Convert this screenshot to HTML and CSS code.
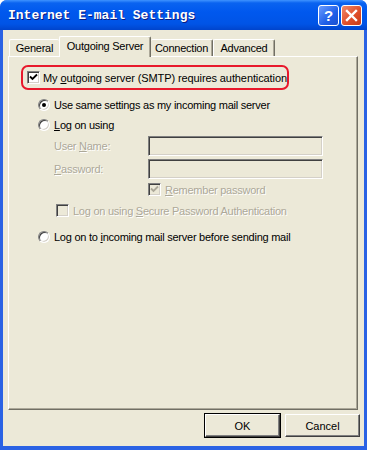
FILE: index.html
```html
<!DOCTYPE html>
<html lang="en">
<head>
  <meta charset="UTF-8">
  <title>Internet E-mail Settings</title>
  <link rel="stylesheet" href="styles.css">
</head>
<body>
  <div class="window">
    <div class="titlebar">
      <span class="title">Internet E-mail Settings</span>
      <div class="title-btns">
        <span class="tbtn help">?</span>
        <span class="tbtn close">
          <svg width="13" height="13" viewBox="0 0 13 13"><path d="M2 2 L11 11 M11 2 L2 11" stroke="#fff" stroke-width="2.4" stroke-linecap="square"/></svg>
        </span>
      </div>
    </div>
    <div class="client">
      <div class="tabs">
        <div class="tab t-general">General</div>
        <div class="tab active t-out">Outgoing Server</div>
        <div class="tab t-conn">Connection</div>
        <div class="tab t-adv">Advanced</div>
      </div>
      <div class="panel">
        <div class="auth">
          <span class="check">
            <svg width="9" height="9" viewBox="0 0 9 9"><path d="M1 3.5 L3.5 6 L8 1.5" stroke="#000" stroke-width="1.8" fill="none"/></svg>
          </span>
          <span class="wide">My <u>o</u>utgoing server (SMTP) requires authentication</span>
        </div>
        <div class="row radio-row first">
          <span class="radio on"></span>
          <span>Use same settings as my incoming mail server</span>
        </div>
        <div class="row radio-row second">
          <span class="radio"></span>
          <span><u>L</u>og on using</span>
        </div>
        <div class="field first-field">
          <label class="dim">User <u>N</u>ame:</label>
          <span class="input"></span>
        </div>
        <div class="field">
          <label class="dim"><u>P</u>assword:</label>
          <span class="input"></span>
        </div>
        <div class="row remember">
          <span class="check disabled">
            <svg width="9" height="9" viewBox="0 0 9 9"><path d="M1 3.5 L3.5 6 L8 1.5" stroke="#aca899" stroke-width="1.8" fill="none"/></svg>
          </span>
          <span class="dim"><u>R</u>emember password</span>
        </div>
        <div class="row spa">
          <span class="check disabled"></span>
          <span class="dim">Log on using <u>S</u>ecure Password Authentication</span>
        </div>
        <div class="row radio-row before">
          <span class="radio"></span>
          <span>Log on to <u>i</u>ncoming mail server before sending mail</span>
        </div>
      </div>
      <div class="buttons">
        <button class="btn default">OK</button>
        <button class="btn">Cancel</button>
      </div>
    </div>
  </div>
</body>
</html>
```

FILE: styles.css
```css
:root {--face: #ece9d8;--dark: #716f64;--shadow: #aca899;--dim: #aca899;}
* { box-sizing: border-box; }
body {margin: 0;background: #fff;font-family: "Liberation Sans", Arial, sans-serif;font-size: 11px;letter-spacing: -0.25px;color: #000;white-space: nowrap;}
u {text-decoration: underline;text-underline-offset: 1px;}
.window {width: 367px;height: 450px;display: flex;flex-direction: column;background: #2a62e4;border-radius: 7px 7px 0 0;overflow: hidden;}
.titlebar {height: 30px;display: flex;align-items: center;justify-content: space-between;padding: 0 5px 0 8px;background: linear-gradient(#3f93ff 0, #0a63f0 3px, #0058ee 40%, #0054e6 80%, #0044cc 100%);}
.title {font-family: "Liberation Mono", monospace;font-weight: bold;font-size: 13px;letter-spacing: 0;color: #fff;text-shadow: 1px 1px #0a1a80;margin-top: 1px;}
.title-btns {display: flex;gap: 2px;}
.tbtn {width: 21px;height: 21px;border: 1px solid #fff;border-radius: 3px;display: flex;align-items: center;justify-content: center;color: #fff;font-weight: bold;font-size: 15px;}
.help {background: linear-gradient(135deg, #6a9cff, #1f5fe8 60%, #1a50d0);}
.close {background: linear-gradient(135deg, #f08a6c, #e0502c 55%, #c83c18);}
.client {flex: 1;margin: 0 3px 4px 3px;background: var(--face);display: flex;flex-direction: column;}
.tabs {display: flex;align-items: flex-end;height: 26px;padding-left: 6px;}
.tab {height: 17px;display: flex;align-items: center;justify-content: center;background: var(--face);border-top: 1px solid #fff;border-left: 1px solid #fff;border-right: 1px solid var(--dark);border-radius: 2px 2px 0 0;box-shadow: inset -1px 0 var(--shadow);}
.t-general {width: 50px;border-right: none;box-shadow: none;}
.t-out {width: 92px;height: 21px;margin-bottom: -1px;position: relative;z-index: 1;padding-bottom: 2px;}
.t-conn {width: 62px;border-left: none;}
.t-adv {width: 62px;}
.panel {margin-left: 5px;width: 350px;height: 354px;border-top: 1px solid #fff;border-left: 1px solid #fff;border-right: 1px solid var(--dark);border-bottom: 1px solid var(--dark);box-shadow: inset -1px -1px var(--shadow);padding: 8px 0 0 12px;}
.auth {width: 268px;height: 25px;border: 2px solid #e8192c;border-radius: 7px;display: flex;align-items: center;gap: 3px;padding-left: 4px;}
.wide {letter-spacing: -0.1px;}
.check {width: 13px;height: 13px;flex: none;background: #fff;border: 1px solid;border-color: #808080 #fff #fff #808080;box-shadow: inset 1px 1px #404040, inset -1px -1px #d4d0c8;display: flex;align-items: center;justify-content: center;}
.check.disabled {background: var(--face);}
.row {display: flex;align-items: center;height: 16px;gap: 4px;}
.radio-row {padding-left: 17px;gap: 4px;}
.first {margin-top: 7px;}
.second {margin-top: 4px;}
.radio {width: 12px;height: 12px;flex: none;border-radius: 50%;background: #fff;border: 1px solid;border-color: #808080 #fff #fff #808080;box-shadow: inset 1px 1px #404040, inset -1px -1px #d4d0c8;display: flex;align-items: center;justify-content: center;}
.radio.on::after {content: "";width: 4px;height: 4px;border-radius: 50%;background: #000;}
.field {display: flex;align-items: center;height: 20px;margin-top: 3px;padding-left: 33px;}
.first-field {margin-top: 3px;}
.field label {width: 94px;}
.input {width: 175px;height: 20px;border: 1px solid;border-color: #808080 #fff #fff #808080;box-shadow: inset 1px 1px #404040, inset -1px -1px #d4d0c8;background: var(--face);}
.dim {color: var(--dim);text-shadow: 1px 1px #fff;}
.remember {margin-top: 4px;padding-left: 127px;height: 13px;}
.spa {margin-top: 8px;padding-left: 35px;height: 13px;}
.before {margin-top: 12px;}
.buttons {display: flex;justify-content: flex-end;gap: 5px;margin-top: 4px;padding-right: 4px;}
.btn {width: 75px;height: 23px;font-family: inherit;font-size: 11px;color: #000;background: var(--face);border: 1px solid;border-color: #fff #404040 #404040 #fff;box-shadow: inset -1px -1px #808080;padding: 0;}
.btn.default {outline: 1px solid #000;border-color: #fff #404040 #404040 #fff;}
```
